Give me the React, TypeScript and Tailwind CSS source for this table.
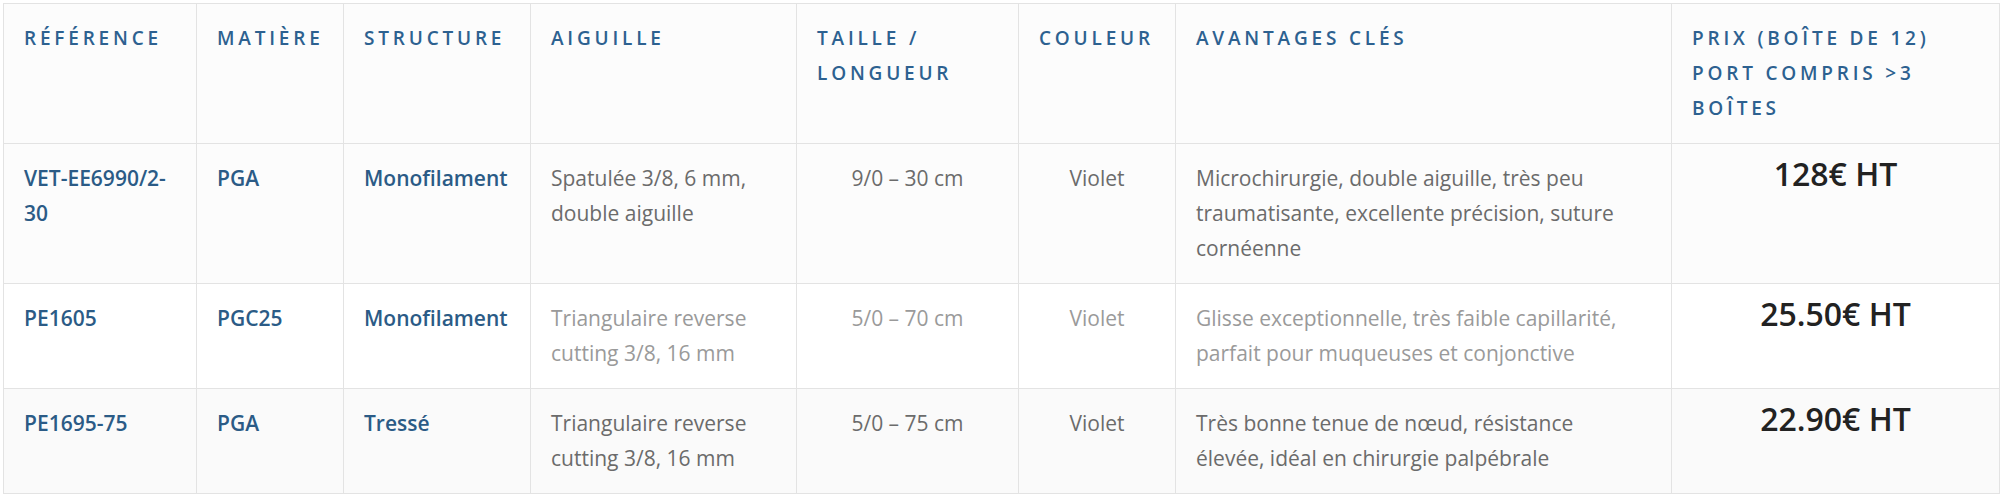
const headers = [
  'Référence',
  'Matière',
  'Structure',
  'Aiguille',
  'Taille / Longueur',
  'Couleur',
  'Avantages clés',
  'Prix (boîte de 12) port compris >3 boîtes',
]

const widths = ['w-[193px]', 'w-[147px]', 'w-[187px]', 'w-[266px]', 'w-[222px]', 'w-[157px]', 'w-[496px]', 'w-[328px]']

const rows = [
  {
    ref: 'VET-EE6990/2-30',
    matiere: 'PGA',
    structure: 'Monofilament',
    aiguille: 'Spatulée 3/8, 6 mm, double aiguille',
    taille: '9/0 – 30 cm',
    couleur: 'Violet',
    avantages: 'Microchirurgie, double aiguille, très peu traumatisante, excellente précision, suture cornéenne',
    prix: '128€ HT',
    bg: 'bg-[#fcfcfc]',
    muted: 'text-[#6b6b6b]',
  },
  {
    ref: 'PE1605',
    matiere: 'PGC25',
    structure: 'Monofilament',
    aiguille: 'Triangulaire reverse cutting 3/8, 16 mm',
    taille: '5/0 – 70 cm',
    couleur: 'Violet',
    avantages: 'Glisse exceptionnelle, très faible capillarité, parfait pour muqueuses et conjonctive',
    prix: '25.50€ HT',
    bg: 'bg-white',
    muted: 'text-[#9a9a9a]',
  },
  {
    ref: 'PE1695-75',
    matiere: 'PGA',
    structure: 'Tressé',
    aiguille: 'Triangulaire reverse cutting 3/8, 16 mm',
    taille: '5/0 – 75 cm',
    couleur: 'Violet',
    avantages: 'Très bonne tenue de nœud, résistance élevée, idéal en chirurgie palpébrale',
    prix: '22.90€ HT',
    bg: 'bg-[#fafafa]',
    muted: 'text-[#6b6b6b]',
  },
]

const cell = 'border border-[#e3e3e3] pl-5 py-[17px] align-top leading-[35px]'

export default function App() {
  return (
    <div className="min-h-screen bg-white pl-[3px] pt-[3px] font-['Open_Sans',sans-serif]">
      <table className="table-fixed border-collapse border border-[#e3e3e3] w-[1996px]">
        <colgroup>
          {widths.map((w, i) => (
            <col key={i} className={w} />
          ))}
        </colgroup>
        <thead>
          <tr className="bg-[#fcfcfc]">
            {headers.map((h) => (
              <th
                key={h}
                className={`${cell} pr-5 text-left text-[19px] font-semibold uppercase tracking-[3.8px] text-[#2d6190]`}
              >
                {h}
              </th>
            ))}
          </tr>
        </thead>
        <tbody>
          {rows.map((r) => (
            <tr key={r.ref} className={r.bg}>
              <td className={`${cell} pr-5 text-[21px] font-semibold text-[#2b5b86]`}>{r.ref}</td>
              <td className={`${cell} pr-5 text-[21px] font-semibold text-[#2b5b86]`}>{r.matiere}</td>
              <td className={`${cell} pr-5 text-[21px] font-semibold text-[#2b5b86]`}>{r.structure}</td>
              <td className={`${cell} pr-5 text-[21px] ${r.muted}`}>{r.aiguille}</td>
              <td className={`${cell} pr-5 text-center text-[21px] ${r.muted}`}>{r.taille}</td>
              <td className={`${cell} pr-5 text-center text-[21px] ${r.muted}`}>{r.couleur}</td>
              <td className={`${cell} pr-[26px] text-[21px] ${r.muted}`}>{r.avantages}</td>
              <td className={`${cell} pr-5 text-center text-[32px] font-semibold text-[#222222]`}>
                <span className="block leading-[26px]">{r.prix}</span>
              </td>
            </tr>
          ))}
        </tbody>
      </table>
    </div>
  )
}
